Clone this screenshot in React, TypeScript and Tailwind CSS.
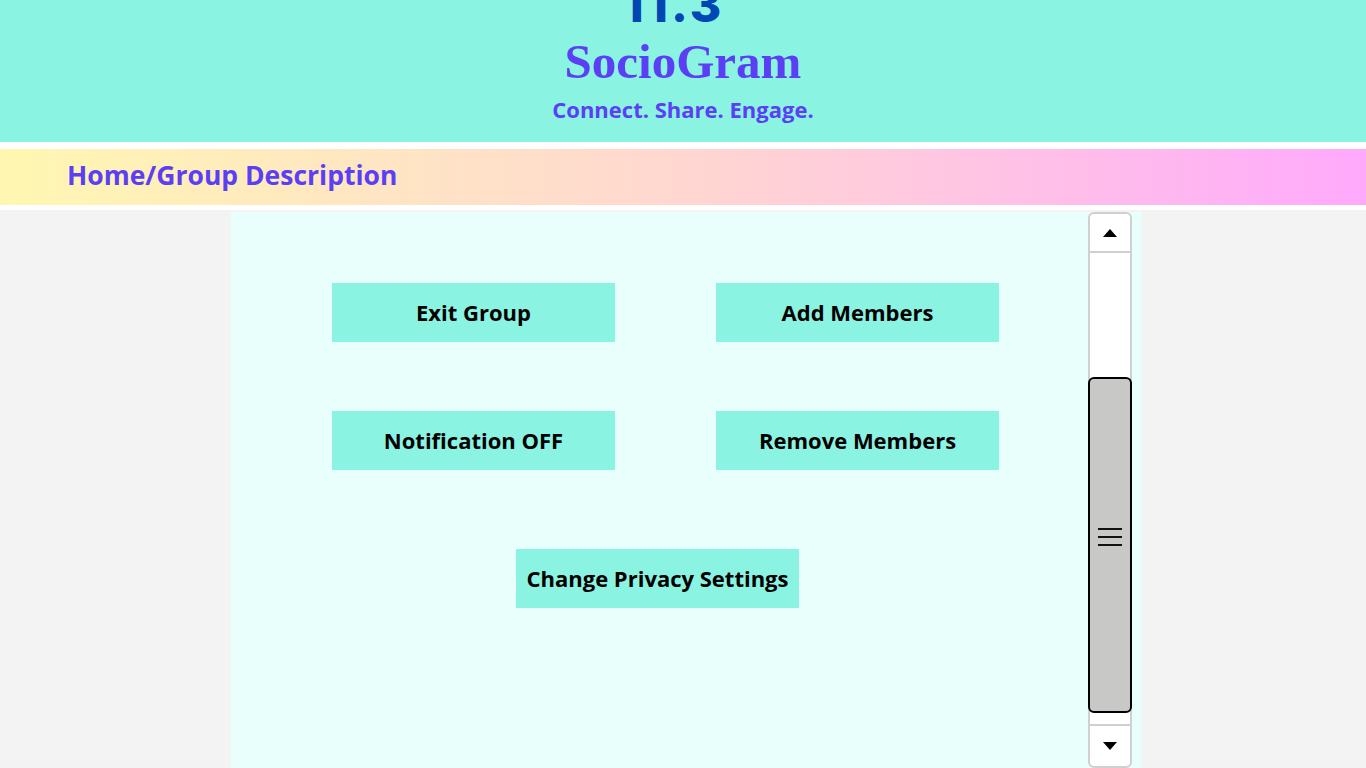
import React from "react";

function Btn({ label, className = "" }: { label: string; className?: string }) {
  return (
    <div
      className={`flex h-[59px] w-[283px] items-center justify-center bg-[#8af3e2] text-[22px] font-bold text-black ${className}`}
      style={{ fontFamily: '"Open Sans", sans-serif' }}
    >
      {label}
    </div>
  );
}

export default function App() {
  return (
    <div className="flex h-[768px] w-[1366px] flex-col overflow-hidden bg-white">
      {/* Header */}
      <div className="relative h-[142px] w-full shrink-0 overflow-hidden bg-[#8af3e2]">
        <div
          className="absolute left-0 right-0 top-[-19px] pr-[19px] text-center text-[48px] font-extrabold leading-none tracking-[3px] text-[#0047b3]"
          style={{ fontFamily: 'Inter, sans-serif' }}
        >
          11.3
        </div>
        <div
          className="absolute left-0 right-0 top-[37px] text-center text-[49px] font-bold leading-none text-[#5b3ff5]"
          style={{ fontFamily: '"Liberation Serif", serif' }}
        >
          SocioGram
        </div>
        <div
          className="absolute left-0 right-0 top-[98px] text-center text-[22px] font-bold leading-none text-[#5b3ff5]"
          style={{ fontFamily: '"Open Sans", sans-serif' }}
        >
          Connect. Share. Engage.
        </div>
      </div>
      <div className="h-[7px] shrink-0" />
      {/* Breadcrumb */}
      <div className="flex h-[56px] shrink-0 items-center bg-gradient-to-r from-[#fff7b1] via-[#ffd7d0] to-[#ffa9fb] pb-[4px] pl-[67px]">
        <span
          className="text-[26.5px] font-bold leading-none text-[#5b3ff5]"
          style={{ fontFamily: '"Open Sans", sans-serif' }}
        >
          Home/Group Description
        </span>
      </div>
      <div className="h-[5px] shrink-0" />
      {/* Body */}
      <div className="flex flex-1 bg-[#f3f3f3] pl-[231px]">
        <div className="mt-[2px] flex w-[910px] bg-[#e9fffc]">
          <div className="flex w-[857px] flex-col pt-[71px]">
            <div className="grid grid-cols-[283px_283px] gap-x-[101px] gap-y-[69px] pl-[101px]">
              <Btn label="Exit Group" />
              <Btn label="Add Members" />
              <Btn label="Notification OFF" />
              <Btn label="Remove Members" />
            </div>
            <div className="mt-[79px] pl-[285px]">
              <Btn label="Change Privacy Settings" />
            </div>
          </div>
          {/* Scrollbar */}
          <div className="flex w-[44px] flex-col rounded-md border-2 border-[#d0d0d0] bg-white">
            <div className="flex h-[39px] shrink-0 items-center justify-center border-b-2 border-[#d0d0d0]">
              <svg width="16" height="10" viewBox="0 0 16 10">
                <polygon points="8,1 15,9 1,9" fill="#000" />
              </svg>
            </div>
            <div className="h-[124px] shrink-0" />
            <div className="mx-[-2px] flex h-[336px] shrink-0 items-center justify-center rounded-md border-2 border-black bg-[#c8c8c6] pb-[16px]">
              <svg width="26" height="20" viewBox="0 0 26 20">
                <line x1="1" y1="2" x2="25" y2="2" stroke="#111" strokeWidth="2" />
                <line x1="1" y1="10" x2="25" y2="10" stroke="#111" strokeWidth="2" />
                <line x1="1" y1="18" x2="25" y2="18" stroke="#111" strokeWidth="2" />
              </svg>
            </div>
            <div className="h-[11px] shrink-0" />
            <div className="flex flex-1 items-center justify-center border-t-2 border-[#d0d0d0]">
              <svg width="16" height="10" viewBox="0 0 16 10">
                <polygon points="1,1 15,1 8,9" fill="#000" />
              </svg>
            </div>
          </div>
        </div>
      </div>
    </div>
  );
}
